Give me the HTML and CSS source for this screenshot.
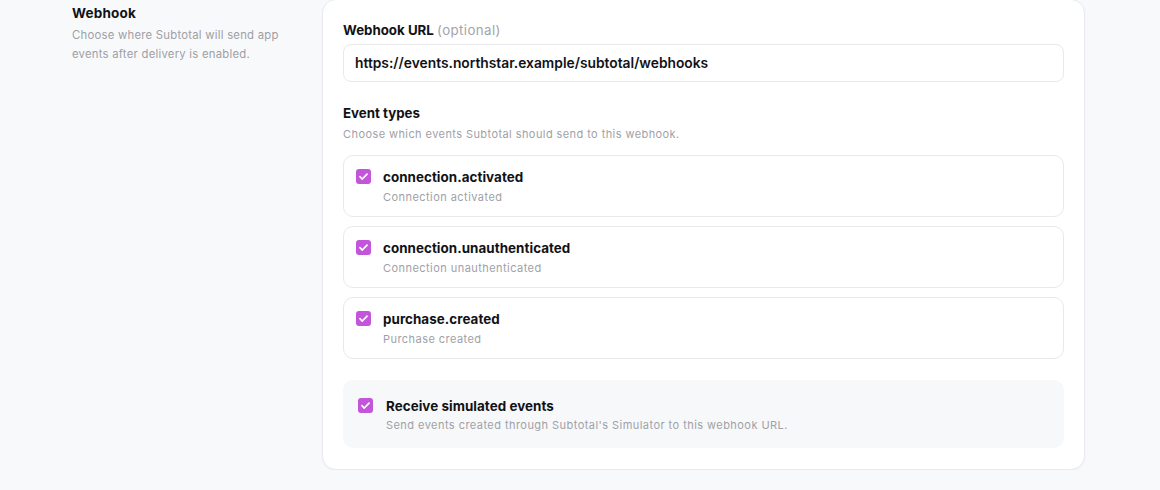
FILE: index.html
```html
<!DOCTYPE html>
<html lang="en">
<head>
<meta charset="utf-8">
<title>Webhook settings</title>
<link rel="stylesheet" href="styles.css">
</head>
<body>
<div class="page">
  <div class="intro">
    <h2 class="intro-title">Webhook</h2>
    <p class="intro-desc">Choose where Subtotal will send app events after delivery is enabled.</p>
  </div>
  <div class="card">
    <label class="field-label">Webhook URL <span class="optional">(optional)</span></label>
    <div class="input">https://events.northstar.example/subtotal/webhooks</div>

    <div class="section-title">Event types</div>
    <div class="section-desc">Choose which events Subtotal should send to this webhook.</div>

    <div class="events">
      <div class="event">
        <span class="check"><svg viewBox="0 0 16 16" width="15" height="15"><path d="M4.2 8.2l2.5 2.5L11.8 5.4" fill="none" stroke="#fff" stroke-width="1.8" stroke-linecap="round" stroke-linejoin="round"/></svg></span>
        <div class="event-text">
          <div class="event-name">connection.activated</div>
          <div class="event-desc">Connection activated</div>
        </div>
      </div>
      <div class="event">
        <span class="check"><svg viewBox="0 0 16 16" width="15" height="15"><path d="M4.2 8.2l2.5 2.5L11.8 5.4" fill="none" stroke="#fff" stroke-width="1.8" stroke-linecap="round" stroke-linejoin="round"/></svg></span>
        <div class="event-text">
          <div class="event-name">connection.unauthenticated</div>
          <div class="event-desc">Connection unauthenticated</div>
        </div>
      </div>
      <div class="event">
        <span class="check"><svg viewBox="0 0 16 16" width="15" height="15"><path d="M4.2 8.2l2.5 2.5L11.8 5.4" fill="none" stroke="#fff" stroke-width="1.8" stroke-linecap="round" stroke-linejoin="round"/></svg></span>
        <div class="event-text">
          <div class="event-name">purchase.created</div>
          <div class="event-desc">Purchase created</div>
        </div>
      </div>
    </div>

    <div class="simulated">
      <span class="check"><svg viewBox="0 0 16 16" width="15" height="15"><path d="M4.2 8.2l2.5 2.5L11.8 5.4" fill="none" stroke="#fff" stroke-width="1.8" stroke-linecap="round" stroke-linejoin="round"/></svg></span>
      <div class="event-text">
        <div class="event-name">Receive simulated events</div>
        <div class="event-desc">Send events created through Subtotal's Simulator to this webhook URL.</div>
      </div>
    </div>
  </div>
</div>
</body>
</html>
```

FILE: styles.css
```css
* { box-sizing: border-box; }
html, body {
  margin: 0;
  padding: 0;
  background: #f8f9fb;
  font-family: Inter, "Noto Sans", sans-serif;
  color: #111216;
}
.page {
  display: flex;
  gap: 40px;
  padding: 0 0 0 72px;
}
.intro {
  width: 210px;
  padding-top: 5px;
}
.intro-title {
  margin: 0;
  font-size: 13.5px;
  font-weight: 700;
  line-height: 17px;
  letter-spacing: 0.2px;
}
.intro-desc {
  margin: 4px 0 0;
  font-size: 11.3px;
  line-height: 19px;
  letter-spacing: 0.25px;
  color: #9e9fa5;
}
.card {
  width: 763px;
  background: #fff;
  border: 1px solid #e9eaee;
  border-radius: 14px;
  margin-top: -1px;
  padding: 22px 20px 21px 20px;
  box-shadow: 0 1px 2px rgba(20, 20, 40, 0.04);
}
.field-label {
  display: block;
  font-size: 13.3px;
  font-weight: 700;
  line-height: 16px;
}
.optional {
  font-weight: 400;
  color: #a3a4aa;
  letter-spacing: 0.4px;
}
.input {
  margin-top: 6px;
  height: 38px;
  border: 1px solid #e8e9ed;
  border-radius: 8px;
  padding: 0 11px;
  display: flex;
  align-items: center;
  font-size: 13.8px;
  font-weight: 600;
}
.section-title {
  margin-top: 23px;
  font-size: 13.3px;
  font-weight: 700;
  line-height: 16px;
}
.section-desc {
  margin-top: 6px;
  font-size: 11px;
  letter-spacing: 0.42px;
  color: #a0a1a7;
  line-height: 14px;
}
.events {
  margin-top: 14px;
  display: flex;
  flex-direction: column;
  gap: 9px;
}
.event {
  height: 62px;
  border: 1px solid #e8e9ed;
  border-radius: 10px;
  display: flex;
  align-items: flex-start;
  gap: 12px;
  padding: 13px 12px;
}
.check {
  flex: none;
  width: 15px;
  height: 15px;
  border-radius: 3px;
  background: #c255da;
  display: flex;
  align-items: center;
  justify-content: center;
}
.event-text { display: flex; flex-direction: column; }
.event-name {
  font-size: 13.4px;
  font-weight: 700;
  line-height: 17px;
  letter-spacing: 0.05px;
}
.event-desc {
  margin-top: 4px;
  font-size: 11px;
  letter-spacing: 0.45px;
  color: #a0a1a7;
  line-height: 14px;
}
.simulated {
  margin-top: 21px;
  height: 68px;
  background: #f7f8fa;
  border-radius: 10px;
  display: flex;
  align-items: flex-start;
  gap: 13px;
  padding: 18px 15px;
}
.simulated .event-desc { margin-top: 3px; }
```
